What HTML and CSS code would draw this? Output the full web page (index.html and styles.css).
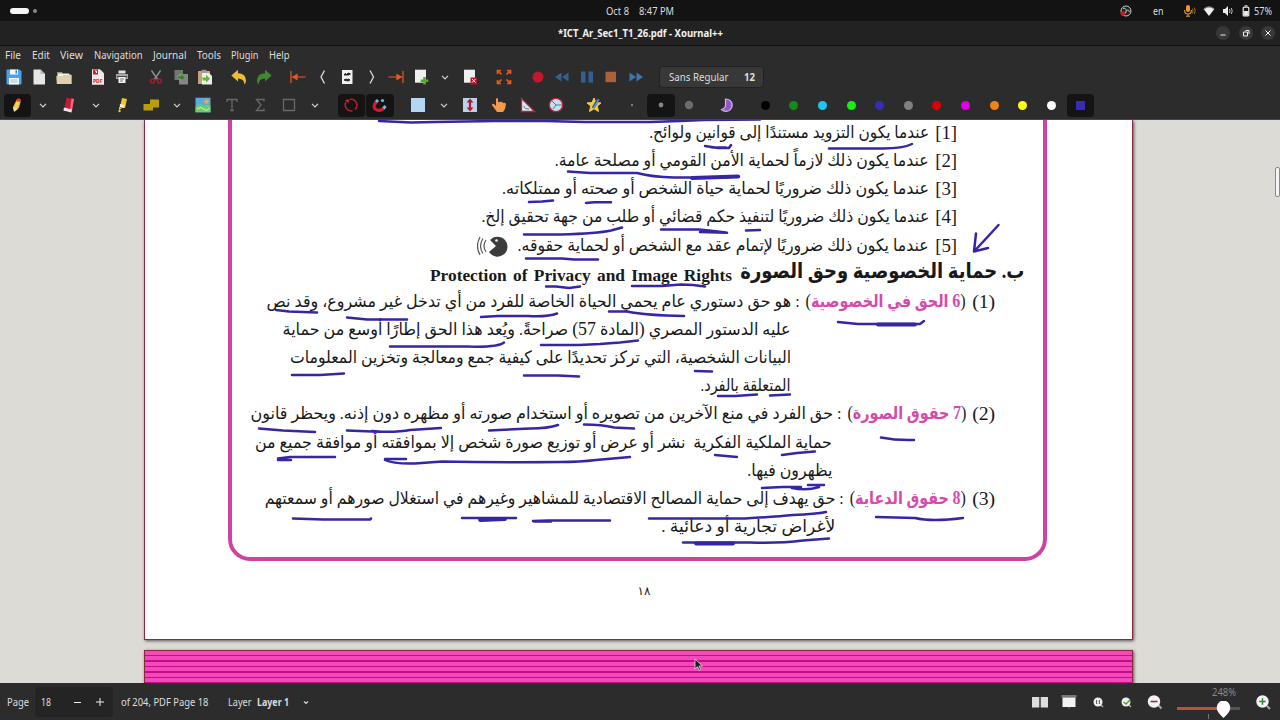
FILE: index.html
```html
<!DOCTYPE html>
<html lang="en">
  <head>
    <meta charset="UTF-8" />
    <meta name="viewport" content="width=device-width, initial-scale=1.0" />
    <title>*ICT_Ar_Sec1_T1_26.pdf - Xournal++</title>
    <link rel="stylesheet" href="styles.css">
  </head>
  <body>
    <header class="system-bar">
      <div class="workspaces"><i class="pill"></i><i class="dot"></i></div>
      <div class="clock"><span data-width="23">Oct 8</span><span data-width="35">8:47 PM</span></div>
      <div class="tray">
        <svg class="obs" width="12" height="12" viewBox="0 0 12 12"><circle cx="6" cy="6" r="5" fill="#222" stroke="#ccc"/><path d="M3 3.5q3-1 3.2 2.3Q9 4 9.4 7M6.2 6Q6 9 3.5 9" fill="none" stroke="#ccc"/><circle cx="2.8" cy="8.6" r="2.4" fill="#d8141c"/></svg>
        <span class="lang" data-width="10.5">en</span>
        <svg class="mic" width="12" height="12" viewBox="0 0 12 12"><rect x="2" y="0" width="4" height="7" rx="2" fill="#e59a28"/><path d="M.7 5v1q0 3 3.3 3t3.3-3V5M4 9v2M2 11.3h4" fill="none" stroke="#e59a28" stroke-width="1.1"/><path d="M8.4 3.5q1.3 2 0 5M10.3 2.5q1.8 3.2 0 6.5" fill="none" stroke="#a06c20"/></svg>
        <svg class="wifi" width="12" height="12" viewBox="0 0 12 12"><path d="M1 4.5Q6 0 11 4.5L6 11z" fill="#eee"/><path d="M.7 4.2Q6-.5 11.3 4.2" fill="none" stroke="#aaa"/></svg>
        <svg class="vol" width="12" height="12" viewBox="0 0 12 12"><path d="M1 4h2l3-3v10L3 8H1z" fill="#eee"/><path d="M7.5 4q1 2 0 4M9.3 3q1.8 3 0 6" fill="none" stroke="#bbb"/></svg>
        <svg class="batt" width="8" height="12" viewBox="0 0 8 12"><rect x="1.2" y="2.2" width="5.6" height="8.8" rx="1" fill="none" stroke="#eee" stroke-width="1.2"/><path d="M2.6.8h2.8M2.2 6.5h3.6v3.7H2.2z" fill="#eee" stroke="#eee"/></svg>
        <span data-width="18">57%</span>
      </div>
    </header>

    <div class="title-bar">
      <h1><span data-width="165">*ICT_Ar_Sec1_T1_26.pdf - Xournal++</span></h1>
      <div class="window-buttons">
        <button><svg width="8" height="8" viewBox="0 0 8 8"><path d="M1.5 6h5"/></svg></button>
        <button><svg width="8" height="8" viewBox="0 0 8 8"><path d="M1.5 3h4v4h-4zM3.5 1.5H7V5"/></svg></button>
        <button><svg width="8" height="8" viewBox="0 0 8 8"><path d="M1.5 1.5l5 5M6.5 1.5l-5 5"/></svg></button>
      </div>
    </div>

    <nav class="menu-bar">
      <span data-width="16">File</span>
      <span data-width="18">Edit</span>
      <span data-width="23">View</span>
      <span data-width="48.5">Navigation</span>
      <span data-width="33.5">Journal</span>
      <span data-width="24">Tools</span>
      <span data-width="27.5">Plugin</span>
      <span data-width="20.5">Help</span>
    </nav>

    <div class="toolbar main-tools">
      <div class="tool"><svg viewBox="0 0 16 16"><path d="M.5 1.5q0-1 1-1h12l2 2v12q0 1-1 1h-13q-1 0-1-1z" fill="#4ba3ee"/><path d="M4 .5h8v5H4zM3 9h10v6.500H3z" fill="#f4f6f8"/><path d="M9.500 1.300h1.500v3.200H9.500z" fill="#2d7fc9"/><path d="M4.500 11h7M4.500 13h7" stroke="#aebdcc"/></svg></div>
      <div class="tool"><svg viewBox="0 0 16 16"><path d="M2.500.5h7l4.500 4.500v10.500H2.500z" fill="#e6e6e4"/><path d="M9.500.5V5H14z" fill="#b5b5b3"/></svg></div>
      <div class="tool"><svg viewBox="0 0 16 16"><path d="M1 3h5l1 2h8v9H1z" fill="#a49173"/><path d="M2 4.500h11v3H2z" fill="#f2f1ed"/><path d="M.3 7h6l1-1h8.400v9H.8z" fill="#dfd0ae"/></svg></div>
      <i class="sep"></i>
      <div class="tool"><svg viewBox="0 0 16 16"><path d="M2 .3h8l4 4v11.400H2z" fill="#ece9e8"/><path d="M3 .5h5v5H3z" fill="#d11f30"/><path d="M5 2h1.500v2" stroke="#fff" fill="none"/><text x="3" y="14" class="pdf-label">PDF</text></svg></div>
      <div class="tool"><svg viewBox="0 0 16 16"><path d="M4.500 1.500h7v3h-7z" fill="#e2e2e2"/><path d="M2 5h12v5H2z" fill="#a6a6a6"/><path d="M3 7h10v1.500H3z" fill="#454545"/><path d="M4.500 8h7v6h-7z" fill="#f1f1f1"/><path d="M6 10h4M6 12h3" stroke="#777"/></svg></div>
      <i class="sep"></i>
      <div class="tool"><svg viewBox="0 0 16 16"><path d="M3.500 1.500L10 11M12.500 1.500L6 11" stroke="#8c8c8c" stroke-width="1.500"/><circle cx="4.500" cy="12" r="2" class="scissor"/><circle cx="11.300" cy="12" r="2" class="scissor"/></svg></div>
      <div class="tool"><svg viewBox="0 0 16 16"><path d="M1.500 1h8.500v10H1.500z" fill="#727572"/><path d="M6 5h9v10.500H6z" fill="#828782"/><path d="M4 7h4V4.500l4 4-4 4V10H5z" fill="#397c2d" stroke="#9bab99" stroke-width=".5"/></svg></div>
      <div class="tool"><svg viewBox="0 0 16 16"><path d="M1 2h12v13H1z" fill="#c2a476"/><path d="M4.500.8h5v3h-5z" fill="#999"/><path d="M5 4h7l3 3v8.500H5z" fill="#ededeb"/><path d="M5 8.500h4V5.800l4 4-4 4v-2.300H6z" fill="#63ba2c"/></svg></div>
      <i class="sep"></i>
      <div class="tool"><svg viewBox="0 0 16 16"><path d="M.3 6.500L7 .8v3.400q8 .3 8 7.200 0 2-1.500 4-.3-6-6.500-6v3.200z" fill="#f0bd31"/></svg></div>
      <div class="tool"><svg viewBox="0 0 16 16"><path d="M15.700 6.500L9 .8v3.400Q1 4.500 1 11.400q0 2 1.500 4 .3-6 6.500-6v3.200z" fill="#3f8730"/></svg></div>
      <i class="sep"></i>
      <div class="tool"><svg viewBox="0 0 16 16"><path d="M1 2v12M2 8h13.500" class="orange"/><path d="M3 8l4-2.500v5z" class="orange"/></svg></div>
      <div class="tool"><svg viewBox="0 0 16 16"><path d="M10.500 1.500L7 8l3.500 6.500" class="arrow-line"/></svg></div>
      <div class="tool"><svg viewBox="0 0 16 16"><path d="M3 1h10.500v14H3z" fill="#f0f0f0"/><path d="M5 6q1.500-3 2.500-.5Q9 3 11.500 5L9.500 6zM5 11q2-1.500 3-.5 1.500-1 3 .5l-2 1z" fill="#20272e" stroke="#20272e"/></svg></div>
      <div class="tool"><svg viewBox="0 0 16 16"><path d="M6 1.500L9.500 8 6 14.500" class="arrow-line"/></svg></div>
      <div class="tool"><svg viewBox="0 0 16 16"><path d="M15 2v12M14 8H.5" class="orange"/><path d="M13 8L9 5.500v5z" class="orange"/></svg></div>
      <div class="tool"><svg viewBox="0 0 16 16"><path d="M2 .7h11v13H2z" fill="#efefed"/><path d="M11.500 8v7.500M7.700 11.700h7.600" stroke="#4fae1d" stroke-width="2.600"/></svg></div>
      <div class="tool"><svg viewBox="0 0 16 16"><path d="M5 6.800l3 3 3-3" class="chevron"/></svg></div>
      <div class="tool"><svg viewBox="0 0 16 16"><path d="M2 .7h11v13H2z" fill="#efefed"/><path d="M8.500 8.500h6.500v7H8.500z" fill="#b31531"/><path d="M10 10l3.500 3.500M13.500 10L10 13.500" stroke="#fff"/></svg></div>
      <i class="sep"></i>
      <div class="tool"><svg viewBox="0 0 16 16"><path d="M5.500 5.500L1.500 1.500M1.500 5V1.500H5M10.500 5.500l4-4M11 1.500h3.500V5M5.500 10.500l-4 4M1.500 11v3.500H5M10.500 10.500l4 4M11 14.500h3.500V11" stroke="#e5591d" stroke-width="1.700" fill="none"/></svg></div>
      <i class="sep"></i>
      <div class="tool"><svg viewBox="0 0 16 16"><circle cx="8" cy="8" r="5.500" fill="#c4162c"/></svg></div>
      <div class="tool"><svg viewBox="0 0 16 16"><path d="M7.500 3.500v9L1 8zM14.500 3.500v9L8 8z" fill="#345f92"/></svg></div>
      <div class="tool"><svg viewBox="0 0 16 16"><path d="M2 2.500h4.500v11H2zM9.500 2.500H14v11H9.500z" fill="#345f92"/></svg></div>
      <div class="tool"><svg viewBox="0 0 16 16"><path d="M2.500 2.700H13v10.500H2.500z" fill="#a9623b"/></svg></div>
      <div class="tool"><svg viewBox="0 0 16 16"><path d="M1.500 3.500v9L8 8zM8.500 3.500v9L15 8z" fill="#3d75b3"/></svg></div>
      <div class="font-button"><span data-width="59.500">Sans Regular</span><b data-width="11">12</b></div>
    </div>

    <div class="toolbar pen-tools">
      <div class="tool active"><svg viewBox="0 0 16 16"><path d="M5 14l-1-4L8 2l4 1-2 8z" fill="#f4a52a"/><path d="M7 5L5 11l3 1 3-7z" fill="#f8d447"/><path d="M8 2q2-2 4 1l-.6 2L7.300 4z" fill="#d6403d"/><path d="M4 10l1 5 4-3z" fill="#eddbb7"/></svg></div>
      <div class="tool drop"><svg viewBox="0 0 16 16"><path d="M5 6.800l3 3 3-3" class="chevron"/></svg></div>
      <div class="tool"><svg viewBox="0 0 16 16"><path d="M5.500.8L13 2l-2 13-8-2z" fill="#c91736"/><path d="M10.500 1.600L13 2l-2 11-2-.6z" fill="#e86f7f"/><path d="M3 10.500l8 2-.6 3-8-2z" fill="#f1e8e8"/></svg></div>
      <div class="tool drop"><svg viewBox="0 0 16 16"><path d="M5 6.800l3 3 3-3" class="chevron"/></svg></div>
      <div class="tool"><svg viewBox="0 0 16 16"><path d="M8 1l5 1-2 9-5-1z" fill="#f3c42d"/><path d="M6 7l5 1-1.500 3-3.800-1z" fill="#f7f1ca"/><path d="M5 10l3 1-3 2z" fill="#f0d052"/><circle cx="5.500" cy="14" r="1.200" fill="#f0c52b"/></svg></div>
      <div class="tool"><svg viewBox="0 0 16 16"><path d="M7 2.500h9v8h-6v3H.5V7H7z" fill="#b99d0d"/></svg></div>
      <div class="tool drop"><svg viewBox="0 0 16 16"><path d="M5 6.800l3 3 3-3" class="chevron"/></svg></div>
      <div class="tool"><svg viewBox="0 0 16 16"><path d="M.5.7h15v14.600H.5z" fill="#5ba9df"/><path d="M.5 10Q5 5 9 9q3-2 6.500 0v6.300H.5z" fill="#6cce65"/><path d="M2 12q4-3 7 0t5-1" fill="none" stroke="#d8f2c1"/><circle cx="11.500" cy="4.500" r="2.300" fill="#f0a941"/></svg></div>
      <div class="tool"><svg viewBox="0 0 16 16"><path d="M3 5V2.500h10V5M8 2.500v11M6 13.500h4" class="disabled"/></svg></div>
      <div class="tool"><svg viewBox="0 0 16 16"><path d="M12 4.500v-2H4.500L9 8l-4.500 5.500H12v-2" class="disabled"/></svg></div>
      <div class="tool"><svg viewBox="0 0 16 16"><path d="M2.500 2.500h11v11h-11z" class="disabled"/></svg></div>
      <div class="tool drop"><svg viewBox="0 0 16 16"><path d="M5 6.800l3 3 3-3" class="chevron"/></svg></div>
      <i class="sep"></i>
      <div class="tool active"><svg viewBox="0 0 16 16"><path d="M3 5a6 6 0 0 0 6.500 8.800M6.500 2.500A6 6 0 0 1 14 8q0 3-2 4.500" fill="none" stroke="#ba1b2c" stroke-width="1.600"/><path d="M2 3L6 2.500 5.500 6z" fill="#d12c34"/></svg></div>
      <div class="tool active"><svg viewBox="0 0 16 16"><path d="M4.500 5Q-.2 9.500 4 12.500q4 2.500 8-1.500" fill="none" stroke="#d41b32" stroke-width="3.200"/><path d="M6 3L4 5M13.500 9l-2 2.500" stroke="#71b8ef" stroke-width="3"/><circle cx="10.500" cy="3.500" r="1.600" fill="#72b8e9"/></svg></div>
      <i class="sep"></i>
      <div class="tool"><svg viewBox="0 0 16 16"><path d="M1 1h14v14H1z" fill="#b6d6ef"/></svg></div>
      <div class="tool drop"><svg viewBox="0 0 16 16"><path d="M5 6.800l3 3 3-3" class="chevron"/></svg></div>
      <div class="tool"><svg viewBox="0 0 16 16"><path d="M1 1h14v14H1z" fill="#b7d3eb"/><path d="M8 3v10" stroke="#b51632" stroke-width="2.200"/><path d="M4.500 5.500L8 1.500l3.500 4zM4.500 10.500L8 14.500l3.500-4z" fill="#b51632"/></svg></div>
      <div class="tool"><svg viewBox="0 0 16 16"><path d="M5 2q1-2 2 0v4q0-2 2-1 2-1 3 1 2-1 3 1l-1 5-2 3H6L1 8q0-2 2-1l2 2z" fill="#f49a4c"/></svg></div>
      <div class="tool"><svg viewBox="0 0 16 16"><path d="M1.500 1.500l13 13h-13z" fill="#d8e8f5" stroke="#b8233e" stroke-width="1.300"/><path d="M4 9q0 3 5 3" fill="none" stroke="#3e7eae"/></svg></div>
      <div class="tool"><svg viewBox="0 0 16 16"><circle cx="8" cy="8" r="6.700" fill="#c5def0" stroke="#b8203b" stroke-width="1.300"/><path d="M8 8h6M8 8L4 4M8 8l-3 4" stroke="#477fa9"/></svg></div>
      <i class="sep"></i>
      <div class="tool"><svg viewBox="0 0 16 16"><path d="M8 1l2 4.600 5 .3-3.700 3.200 1.200 5.400L8 11.800l-4.500 2.700 1.200-5.400L1 5.900l5-.3z" fill="#f3cc47" stroke="#f3cc47"/><path d="M12.500 2L7 11" stroke="#2457a5" stroke-width="2.800"/><path d="M12.800 2.500L7.500 11" stroke="#8bc6ee" stroke-width=".8"/></svg></div>
      <i class="sep"></i>
      <div class="tool"><svg viewBox="0 0 16 16"><circle cx="8" cy="8" r="1.200" fill="#777"/></svg></div>
      <div class="tool active"><svg viewBox="0 0 16 16"><circle cx="8" cy="8" r="2.400" fill="#858585"/></svg></div>
      <div class="tool"><svg viewBox="0 0 16 16"><circle cx="8" cy="8" r="4.200" fill="#6c6c6c"/></svg></div>
      <i class="sep"></i>
      <div class="tool"><svg viewBox="0 0 16 16"><path d="M6.500 2a6.200 6.200 0 1 1-4 10.500q4-1.500 4-4T6.500 2z" fill="#9158c4" stroke="#d2aff0" stroke-width="1.200"/></svg></div>
      <i class="sep"></i>
      <div class="tool"><i class="color black"></i></div>
      <div class="tool"><i class="color green"></i></div>
      <div class="tool"><i class="color cyan"></i></div>
      <div class="tool"><i class="color lime"></i></div>
      <div class="tool"><i class="color blue"></i></div>
      <div class="tool"><i class="color gray"></i></div>
      <div class="tool"><i class="color red"></i></div>
      <div class="tool"><i class="color magenta"></i></div>
      <div class="tool"><i class="color orange-dot"></i></div>
      <div class="tool"><i class="color yellow"></i></div>
      <div class="tool"><i class="color white"></i></div>
      <div class="tool active"><i class="color blue square"></i></div>
    </div>

    <main class="viewer">
      <article class="page" dir="rtl" lang="ar">
        <section class="frame">
          <div class="line item"><span class="marker" data-width="22">[1]</span><span data-width="280">عندما يكون التزويد مستندًا إلى قوانين ولوائح.</span></div>
          <div class="line item"><span class="marker" data-width="22">[2]</span><span data-width="374">عندما يكون ذلك لازماً لحماية الأمن القومي أو مصلحة عامة.</span></div>
          <div class="line item"><span class="marker" data-width="22">[3]</span><span data-width="427">عندما يكون ذلك ضروريًا لحماية حياة الشخص أو صحته أو ممتلكاته.</span></div>
          <div class="line item"><span class="marker" data-width="22">[4]</span><span data-width="448">عندما يكون ذلك ضروريًا لتنفيذ حكم قضائي أو طلب من جهة تحقيق إلخ.</span></div>
          <div class="line item"><span class="marker" data-width="22">[5]</span><span data-width="411">عندما يكون ذلك ضروريًا لإتمام عقد مع الشخص أو لحماية حقوقه.</span>
            <svg class="speak" width="31" height="22" viewBox="0 0 31 22"><path d="M13 5a10 10 0 1 1-1 12l7-6z" fill="#3b3b3b"/><circle cx="19.500" cy="5.500" r="1.300" fill="#fff"/><path d="M9 5q-4 6 0 12M6 3.500q-5 7.500 0 15M3 2q-5 9 0 18" fill="none" stroke="#555" stroke-width="1.200"/></svg>
          </div>
          <h2 class="line heading"><span data-width="284">ب. حماية الخصوصية وحق الصورة</span><span class="english" dir="ltr" data-width="302">Protection of Privacy and Image Rights</span></h2>
          <div class="line numbered"><span class="marker" data-width="23">(1)</span><span data-width="160"><i>(</i><b><i>6</i> الحق في الخصوصية</b><i>)</i></span><span data-width="533">: هو حق دستوري عام يحمي الحياة الخاصة للفرد من أي تدخل غير مشروع، وقد نص</span></div>
          <div class="line privacy"><span data-width="508">عليه الدستور المصري <i>(</i>المادة <i>57</i><i>)</i> صراحةً. ويُعد هذا الحق إطارًا أوسع من حماية</span></div>
          <div class="line privacy"><span data-width="501">البيانات الشخصية، التي تركز تحديدًا على كيفية جمع ومعالجة وتخزين المعلومات</span></div>
          <div class="line privacy"><span data-width="90">المتعلقة بالفرد.</span></div>
          <div class="line numbered"><span class="marker" data-width="23">(2)</span><span data-width="119"><i>(</i><b><i>7</i> حقوق الصورة</b><i>)</i></span><span data-width="591">: حق الفرد في منع الآخرين من تصويره أو استخدام صورته أو مظهره دون إذنه. ويحظر قانون</span></div>
          <div class="line image"><span data-width="577">حماية الملكية الفكرية&nbsp; نشر أو عرض أو توزيع صورة شخص إلا بموافقته أو موافقة جميع من</span></div>
          <div class="line image"><span data-width="85">يظهرون فيها.</span></div>
          <div class="line numbered"><span class="marker" data-width="23">(3)</span><span data-width="116"><i>(</i><b><i>8</i> حقوق الدعاية</b><i>)</i></span><span data-width="579">: حق يهدف إلى حماية المصالح الاقتصادية للمشاهير وغيرهم في استغلال صورهم أو سمعتهم</span></div>
          <div class="line publicity"><span data-width="174">لأغراض تجارية أو دعائية .</span></div>
        </section>
        <footer class="page-number">١٨</footer>
      </article>
      <div class="page next-page"></div>

      <!-- pen strokes drawn over the page -->
      <svg class="ink" viewBox="0 120 1280 563" width="1280" height="563">
        <path d="M379 121l32 1.500 23-.5 62-1h49l40 1h65l30-1 24-1 56-.5"/>
        <path d="M829 148.500h54q20 0 29-4.500M705 146l13 2h11l2-3M711 147.500h15"/>
        <path d="M568 171.500l22 1.500h47q15 4 37 4.500h43l22-1"/><path class="thick" d="M692 178l46-1.500"/>
        <path d="M529 202l13-.5 11-1M586 203l8-.8h17M661 229.500h38l10 1 17 2M700 232l27 .7M746 230.500l14-.5"/>
        <path d="M524 234.500h37q36-1 50-4l11-3M526 258.500h36l12 1h24"/>
        <path d="M998.500 225q-10 11-24.500 26.500M974 251.500l2-18M974 251.500l14-3.500"/>
        <path d="M546 286.500h10l13 1.500 11-1.500M632 286h30l19-1.500q12 0 24 2"/>
        <path d="M609 311.500h18q20 4 57 4.500M481 317l17-1h30q20 1 29-2.500M276 310l13 1.500 28 1M347 317.500l20 2h40"/>
        <path d="M838 322l20 2h62l4-3"/><path class="thick" d="M878 324.500h37"/>
        <path d="M541 345h38l21-1 20-1.500 18-2M390 346.500h78q30 1 36-4M695 371l17 .5M524 375.500h34l21 1M292 375h28l24-1.500M718 396h17l22-1.500M770 395.500l20-1"/>
        <path d="M881 437.500q15 3 33 2.500M584 424.500q18 0 30 3l20 1M489 430.500l41-2q18 0 28-3.500M347 430.500l25 1q27 1 38-1.500l31-2M372 431l10 .7M259 428.500l24 2 32 1.500"/>
        <path d="M782 455l15-2 18-1.500M715 455l22 2M278 458.500l12-1.500h45M278 460h13M385 459h21M385 460q8 4 30 3.500l27-2q50 1 118 .5 20 0 36-2l34-3"/>
        <path d="M808 485h16M762 488l20-1h19M792 488q15 3 27-1M649 518.500h96q32-2 48-3.500 23-1 33-3M876 517l39 1q17 4 48 0"/>
        <path d="M293 518.500l30 1h47l1-1M462 518h54M533 521l16-.5h61M534 521.500h17"/><path class="thick" d="M480 520l25-1"/>
        <path d="M683 542.500h67q30 1 53-2l26-2"/><path class="thick" d="M696 543.500h37"/>
      </svg>
      <svg class="cursor" width="10" height="14" viewBox="0 0 10 14"><path d="M1 1v10l2.500-2.300L5.300 12.500l1.500-.7L5 8h3.500z" fill="#16231f" stroke="#ddd" stroke-width=".8"/></svg>
    </main>

    <footer class="status-bar">
      <span data-width="22">Page</span>
      <div class="spin"><span data-width="10">18</span><svg width="10" height="10" viewBox="0 0 10 10"><path d="M2 5.500h7"/></svg><svg width="10" height="10" viewBox="0 0 10 10"><path d="M1 5h8M5 1v8"/></svg></div>
      <span class="total" data-width="87.500">of 204, PDF Page 18</span>
      <span class="layer-label" data-width="23.500">Layer</span>
      <b data-width="32">Layer 1</b>
      <svg class="layer-drop" width="8" height="8" viewBox="0 0 8 8"><path d="M2 3.500l2 2 2-2" class="chevron"/></svg>
      <div class="view-tools">
        <svg viewBox="0 0 16 16"><path d="M0 3h7.300v10.500H0zM8.700 3H16v10.500H8.700z" fill="#dedede"/></svg>
        <svg viewBox="0 0 16 16"><path d="M.5 1h15v2.500H.5z" fill="#777"/><path d="M1.500 3.500h13V13h-13z" fill="#f3f3f3"/><path d="M6 13h4l-2 3z" fill="#484848"/></svg>
        <svg viewBox="0 0 16 16"><path d="M10 10l3 3" stroke="#aaa" stroke-width="1.500"/><circle cx="8" cy="8" r="4.500" fill="#eee"/><path d="M6.500 6v4M9.500 6v4M8 7v.5M8 9v.5" stroke="#444" stroke-width=".8"/></svg>
        <svg viewBox="0 0 16 16"><path d="M10 10l3 3" stroke="#aaa" stroke-width="1.500"/><circle cx="8" cy="8" r="4.500" fill="#eee"/><path d="M5.500 8l2.500 2 4-4" fill="none" stroke="#4caa2a" stroke-width="1.500"/></svg>
        <svg viewBox="0 0 16 16"><path d="M11 11l3.500 3.500" stroke="#aaa" stroke-width="2"/><circle cx="7" cy="7.500" r="6.200" fill="#f4f4f4"/><path d="M3.500 7.500h7" stroke="#b1163a" stroke-width="1.500"/></svg>
      </div>
      <div class="zoom"><span data-width="24">248%</span><svg width="64" height="18" viewBox="0 0 64 18"><path d="M40 7.500h23" stroke="#555" stroke-width="3"/><path d="M0 7.500h43" stroke="#b75439" stroke-width="3"/><path d="M31.500 13v5" stroke="#777"/><path d="M40 8a6.700 6.700 0 1 1 13 0q0 3-6.500 9Q40 11 40 8z" fill="#fff"/></svg></div>
      <svg class="zoom-in" viewBox="0 0 16 16" width="16" height="16"><path d="M12 12l3 3" stroke="#aaa" stroke-width="2"/><circle cx="7.500" cy="7.500" r="6.200" fill="#f4f4f4"/><path d="M4.300 7.500h6.400M7.500 4.300v6.400" stroke="#278a2b" stroke-width="1.500"/></svg>
    </footer>

    <script>
      // Fit each run of text to the width it has in the document
      document.querySelectorAll('[data-width]').forEach((el) => {
        const inner = document.createElement('span');
        inner.className = 'fit';
        inner.append(...el.childNodes);
        el.append(inner);
        const width = parseFloat(el.dataset.width);
        const scale = width / inner.getBoundingClientRect().width;
        el.style.width = `${width}px`;
        inner.style.transform = `scaleX(${scale})`;
      });
    </script>
  </body>
</html>
```

FILE: styles.css
```css
* {
  margin: 0;
  padding: 0;
  box-sizing: border-box;
}

body {
  width: 1280px;
  height: 720px;
  overflow: hidden;
  display: flex;
  flex-direction: column;
  background: #2c2c2c;
  color: #dedede;
  font: 11px/14px "Noto Sans", sans-serif;
}

svg {
  display: block;
  flex: none;
}

[data-width] {
  display: block;
  flex: none;
  white-space: nowrap;
}

.fit {
  display: inline-block;
  transform-origin: left center;
}

[dir="rtl"] .fit {
  transform-origin: right center;
}

[dir="ltr"] .fit {
  transform-origin: left center;
}

/* Desktop bar */
.system-bar {
  height: 21px;
  flex: none;
  display: grid;
  grid-template-columns: 606px 1fr auto;
  align-items: center;
  background: #131313;
}

.workspaces {
  display: flex;
  align-items: center;
  gap: 4px;
  padding-left: 10px;
}

.pill {
  width: 19px;
  height: 6px;
  border-radius: 3px;
  background: #f5f5f5;
}

.dot {
  width: 4px;
  height: 4px;
  border-radius: 50%;
  background: #888;
}

.clock {
  display: flex;
  gap: 10px;
}

.tray {
  display: flex;
  align-items: center;
  padding-right: 8px;
}

.lang { margin-left: 21px; }
.mic { margin-left: 21px; }
.wifi { margin-left: 7px; }
.vol { margin-left: 7px; }
.batt { margin: 0 4px 0 8px; }

/* Window title */
.title-bar {
  height: 25px;
  flex: none;
  display: flex;
  justify-content: space-between;
  align-items: center;
  background: #222;
  border-bottom: 1px solid #101010;
}

h1 {
  padding-left: 558px;
  font-size: 11px;
  line-height: 14px;
  color: #f2f2f2;
}

.window-buttons {
  display: flex;
  gap: 8.5px;
  padding-right: 5px;
}

.window-buttons button {
  width: 14px;
  height: 14px;
  border: none;
  border-radius: 50%;
  display: grid;
  place-items: center;
  background: #383838;
}

.window-buttons path,
.spin path {
  fill: none;
  stroke: #eee;
}

.menu-bar {
  height: 17px;
  flex: none;
  display: flex;
  align-items: center;
  gap: 10.5px;
  padding-left: 5px;
}

/* Toolbars */
.toolbar {
  flex: none;
  display: flex;
  align-items: center;
}

.tool {
  flex: none;
  display: grid;
  place-items: center;
}

.tool svg {
  width: 16px;
  height: 16px;
}

.main-tools {
  height: 28px;
  padding-left: 2.2px;
}

.main-tools .tool { width: 24.56px; }
.main-tools .sep { width: 9.5px; }

.pen-tools {
  height: 29px;
  padding-left: 2.5px;
  border-bottom: 1px solid #454545;
}

.pen-tools .tool {
  width: 28.62px;
  height: 23px;
}

.pen-tools .drop { width: 24px; }
.pen-tools .sep { width: 9.4px; }

.pen-tools .active {
  background: #141414;
  background-clip: content-box;
  padding: 0 .5px;
  border-radius: 4px;
}

.font-button {
  width: 105px;
  height: 22px;
  display: flex;
  align-items: center;
  justify-content: space-between;
  margin-left: 11px;
  padding: 0 8px 0 9px;
  border: 1px solid #222;
  border-radius: 4px;
  background: #383838;
}

.pdf-label {
  font: bold 5px "Noto Sans", sans-serif;
  fill: #c72335;
}

.scissor {
  fill: none;
  stroke: #9c1e2a;
  stroke-width: 1.5;
}

.orange {
  fill: #e85a20;
  stroke: #e85a20;
  stroke-width: 1.2;
}

.arrow-line {
  fill: none;
  stroke: #ddd;
  stroke-width: 1.3;
}

.chevron {
  fill: none;
  stroke: #d5d5d5;
  stroke-width: 1.2;
}

.disabled {
  fill: none;
  stroke: #686868;
  stroke-width: 1.3;
}

.color {
  width: 9px;
  height: 9px;
  border-radius: 50%;
}

.black { background: #000; }
.green { background: #138b13; }
.cyan { background: #1fc5f2; }
.lime { background: #17ed17; }
.blue { background: #382bb5; }
.gray { background: #808080; }
.red { background: #df0000; }
.magenta { background: #e000e5; }
.orange-dot { background: #ec8419; }
.yellow { background: #faff16; }
.white { background: #fff; }
.square { border-radius: 0; }

/* Document */
.viewer {
  position: relative;
  flex: 1;
  min-height: 0;
  overflow: hidden;
  display: flex;
  flex-direction: column;
  align-items: center;
  gap: 10px;
  padding-right: 3px;
  background: #dcdbd6;
}

.viewer::after {
  content: '';
  position: absolute;
  right: 0;
  top: 47px;
  width: 3px;
  height: 28px;
  border: 1px solid #888;
  border-radius: 2px;
  background: #f5f5f5;
}

.page {
  width: 989px;
  flex: none;
  background: #fff;
  border: solid #87293f;
  border-width: 0 1.5px 1px;
  box-shadow: 1px 1px 3px #555;
}

article.page {
  height: 520px;
  color: #191919;
}

.frame {
  width: 819px;
  height: 443px;
  margin: -2px 85px 0;
  padding-top: 1px;
  border: 4px solid #cc43a1;
  border-top: none;
  border-radius: 0 0 22px 22px;
}

.line {
  height: 28.15px;
  display: flex;
  align-items: center;
  gap: 6px;
  font: 17px/28px "Liberation Serif", "DejaVu Sans", serif;
}

.line i {
  font-size: 19px;
  line-height: 1;
  font-style: normal;
}

.line b { color: #d64aa9; }
.marker { font-size: 19px; }
.item { padding-right: 86px; }
.numbered { padding-right: 48px; }
.privacy { padding-right: 252px; }
.image { padding-right: 211px; }
.publicity { padding-right: 208px; }

.heading {
  padding-right: 19px;
  padding-bottom: 5px;
  gap: 8px;
  font-size: 21px;
  font-weight: bold;
}

.english {
  font-size: 17.5px;
  word-spacing: 2px;
  padding-top: 8px;
}

.speak { margin-right: 4px; }

.page-number {
  padding: 20px 0 0 11px;
  text-align: center;
  font: 12px/20px "Liberation Serif", "DejaVu Sans", serif;
}

.next-page {
  height: 60px;
  border-width: 1px;
  background: repeating-linear-gradient(#f449ba 0 4px, #c20d86 4px 5.5px);
}

.ink {
  position: absolute;
  left: 0;
  top: 0;
  fill: none;
  stroke: #3426a4;
  stroke-width: 2.5;
  stroke-linecap: round;
  stroke-linejoin: round;
}

.ink .thick { stroke-width: 3.8; }

.cursor {
  position: absolute;
  left: 694px;
  top: 538px;
}

/* Status bar */
.status-bar {
  height: 37px;
  flex: none;
  display: flex;
  align-items: center;
  padding-left: 7px;
}

.spin {
  width: 78px;
  height: 30px;
  display: flex;
  align-items: center;
  margin-left: 6px;
  padding-left: 6px;
  border-radius: 4px;
  background: #242424;
}

.spin svg { margin-left: 21px; }
.spin svg + svg { margin-left: 13px; }
.total { margin-left: 8px; }
.layer-label { margin: 0 6px 0 19px; }
.layer-drop { margin-left: 13px; }

.view-tools {
  display: flex;
  gap: 12.8px;
  margin-left: 722px;
}

.view-tools svg {
  width: 16px;
  height: 16px;
}

.zoom {
  margin-left: 14px;
  height: 34px;
  color: #888;
}

.zoom > span {
  margin-left: 35px;
}

.zoom svg { margin-top: 2px; }
.zoom-in { margin-left: 14px; }
```
